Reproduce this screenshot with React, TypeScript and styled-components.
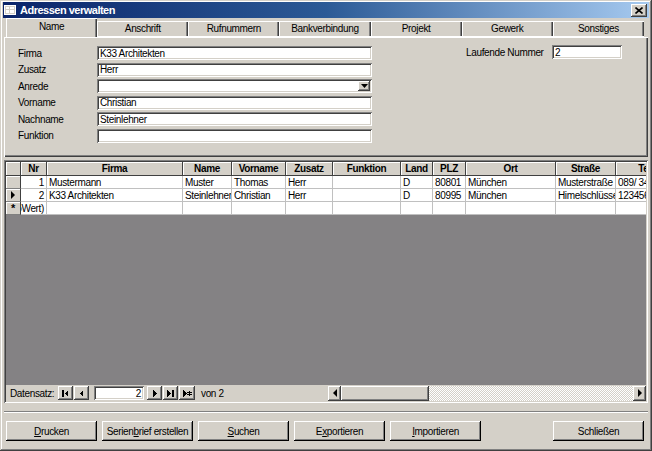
import React from 'react';
import styled, { createGlobalStyle, css } from 'styled-components';

const GlobalStyle = createGlobalStyle`
  html, body { margin: 0; padding: 0; background: #d4d0c8; }
  body {
    font-family: "Liberation Sans", Arial, sans-serif;
    font-size: 10px;
    letter-spacing: -0.35px;
    color: #000;
  }
  * { box-sizing: border-box; }
`;

const raised = css`
  background: #d4d0c8;
  box-shadow: inset -1px -1px #404040, inset 1px 1px #fff, inset -2px -2px #808080;
`;

const sunken = css`
  background: #fff;
  box-shadow: inset 1px 1px #808080, inset -1px -1px #fff, inset 2px 2px #404040, inset -2px -2px #d4d0c8;
`;

interface Column {
  key: string;
  label: string;
  width: number;
  align?: 'left' | 'right';
}

const columns: Column[] = [
  { key: 'nr', label: 'Nr', width: 26, align: 'right' },
  { key: 'firma', label: 'Firma', width: 136 },
  { key: 'name', label: 'Name', width: 49 },
  { key: 'vorname', label: 'Vorname', width: 54 },
  { key: 'zusatz', label: 'Zusatz', width: 47 },
  { key: 'funktion', label: 'Funktion', width: 68 },
  { key: 'land', label: 'Land', width: 32 },
  { key: 'plz', label: 'PLZ', width: 33 },
  { key: 'ort', label: 'Ort', width: 90 },
  { key: 'strasse', label: 'Straße', width: 60 },
  { key: 'tel', label: 'Telefon', width: 78 },
];

const rows: Record<string, string>[] = [
  {
    nr: '1', firma: 'Mustermann', name: 'Muster', vorname: 'Thomas', zusatz: 'Herr', funktion: '',
    land: 'D', plz: '80801', ort: 'München', strasse: 'Musterstraße Nr. 1', tel: '089/ 3456789',
  },
  {
    nr: '2', firma: 'K33 Architekten', name: 'Steinlehner', vorname: 'Christian', zusatz: 'Herr', funktion: '',
    land: 'D', plz: '80995', ort: 'München', strasse: 'Himelschlüsselweg 5', tel: '12345678',
  },
];

const tabs = ['Name', 'Anschrift', 'Rufnummern', 'Bankverbindung', 'Projekt', 'Gewerk', 'Sonstiges'];

const gridCols = `15px ${columns.map((c) => `${c.width}px`).join(' ')}`;

const Window = styled.div`
  width: 652px;
  height: 451px;
  display: flex;
  flex-direction: column;
  padding: 2px 3px 3px;
  background: #d4d0c8;
  box-shadow: inset -1px -1px #404040, inset 1px 1px #d4d0c8, inset -2px -2px #808080, inset 2px 2px #fff;
  overflow: hidden;
`;

const TitleBar = styled.div`
  height: 16px;
  display: flex;
  align-items: center;
  padding: 0 2px 0 1px;
  background: linear-gradient(90deg, #0a246a 0%, #2c5a96 50%, #a6caf0 100%);
  color: #fff;
  font-weight: bold;
  font-size: 11px;
  letter-spacing: -0.5px;
`;

const TitleText = styled.span`
  flex: 1;
  margin-left: 4px;
`;

const CloseButton = styled.div`
  ${raised};
  width: 16px;
  height: 13px;
  display: flex;
  align-items: center;
  justify-content: center;
`;

const Body = styled.div`
  flex: 1;
  display: flex;
  flex-direction: column;
  margin: 0 1px;
`;

const TabStrip = styled.div`
  height: 19px;
  display: flex;
  align-items: flex-end;
  padding: 0 4px 0 2px;
`;

const Tab = styled.div<{ $active?: boolean }>`
  flex: 1;
  height: ${(p) => (p.$active ? 19 : 16)}px;
  display: flex;
  justify-content: center;
  padding-top: ${(p) => (p.$active ? 3 : 2)}px;
  background: #d4d0c8;
  box-shadow: inset 1px 1px #fff, inset -1px 0 #404040, inset -2px 0 #808080;
  ${(p) => !p.$active && css`border-bottom: 1px solid #fff;`}
  position: relative;
  z-index: ${(p) => (p.$active ? 1 : 0)};
`;

const Panel = styled.div`
  height: 120px;
  display: flex;
  justify-content: space-between;
  padding: 9px 26px 0 14px;
  box-shadow: inset 1px 0 #fff, inset 0 1px #fff, inset -1px -1px #404040, inset -2px -2px #808080;
`;

const FieldGrid = styled.div`
  display: grid;
  grid-template-columns: 79px 275px;
  grid-auto-rows: 14px;
  row-gap: 2.6px;
  align-content: start;
`;

const Label = styled.div`
  display: flex;
  align-items: center;
  white-space: nowrap;
`;

const TextBox = styled.div`
  ${sunken};
  height: 14px;
  display: flex;
  align-items: center;
  padding: 0 3px;
  white-space: nowrap;
  overflow: hidden;
`;

const ComboBox = styled(TextBox)`
  justify-content: flex-end;
  padding: 2px;
`;

const DropButton = styled.div`
  ${raised};
  width: 12px;
  height: 10px;
  display: flex;
  align-items: center;
  justify-content: center;
`;

const SideField = styled.div`
  display: grid;
  grid-template-columns: 86px 70px;
  grid-auto-rows: 14px;
  margin-top: -1px;
`;

const SubForm = styled.div`
  margin-top: 3px;
  height: 243px;
  display: flex;
  flex-direction: column;
  padding: 2px;
  background: #d4d0c8;
  box-shadow: inset 1px 1px #808080, inset -1px -1px #fff, inset 2px 2px #404040, inset -2px -2px #d4d0c8;
`;

const Sheet = styled.div`
  flex: 1;
  background: #848284;
  overflow: hidden;
`;

const SheetRow = styled.div<{ $header?: boolean }>`
  display: grid;
  grid-template-columns: ${gridCols};
  height: ${(p) => (p.$header ? 14 : 13)}px;
`;

const HeadCell = styled.div`
  background: #d4d0c8;
  box-shadow: inset 1px 1px #fff;
  border-right: 1px solid #404040;
  border-bottom: 1px solid #404040;
  display: flex;
  align-items: center;
  justify-content: center;
  font-weight: bold;
  overflow: hidden;
  white-space: nowrap;
`;

const Selector = styled.div`
  background: #d4d0c8;
  box-shadow: inset 1px 1px #fff;
  border-right: 1px solid #404040;
  border-bottom: 1px solid #808080;
  display: flex;
  align-items: center;
  justify-content: center;
  font-weight: bold;
  font-size: 11px;
`;

const Cell = styled.div<{ $align?: 'left' | 'right' }>`
  background: #fff;
  border-right: 1px solid #c0c0c0;
  border-bottom: 1px solid #c0c0c0;
  display: flex;
  align-items: center;
  justify-content: ${(p) => (p.$align === 'right' ? 'flex-end' : 'flex-start')};
  padding: 0 2px;
  white-space: nowrap;
  overflow: hidden;
`;

const NavBar = styled.div`
  height: 16px;
  display: flex;
  align-items: center;
  padding-left: 4px;
  background: #d4d0c8;
`;

const NavLabel = styled.span`
  width: 48px;
`;

const NavGroup = styled.div<{ $offset: number }>`
  display: flex;
  gap: 1px;
  margin-left: ${(p) => p.$offset}px;
`;

const NavButton = styled.div<{ $wide?: boolean }>`
  ${raised};
  width: ${(p) => (p.$wide ? 16 : 15)}px;
  height: 14px;
  display: flex;
  align-items: center;
  justify-content: center;
`;

const RecordBox = styled(TextBox)`
  margin-left: 5px;
  width: 50px;
  justify-content: flex-end;
`;

const OfText = styled.span`
  margin-left: 6px;
  flex: 1;
`;

const ScrollBar = styled.div`
  width: 318px;
  height: 15px;
  display: flex;
`;

const ScrollArrow = styled.div`
  ${raised};
  width: 13px;
  display: flex;
  align-items: center;
  justify-content: center;
`;

const ScrollThumb = styled.div`
  ${raised};
  width: 88px;
`;

const ScrollTrack = styled.div`
  flex: 1;
  background-color: #eeede9;
  background-image: repeating-conic-gradient(#ffffff 0 25%, #d4d0c8 0 50%);
  background-size: 2px 2px;
`;

const Separator = styled.div`
  margin-top: 8px;
  height: 2px;
  border-top: 1px solid #808080;
  border-bottom: 1px solid #fff;
`;

const ButtonRow = styled.div`
  margin-top: 8px;
  display: flex;
  gap: 5px;
  padding: 0 4px 0 2px;
`;

const Button = styled.div<{ $push?: boolean }>`
  width: 91px;
  height: 20px;
  display: flex;
  align-items: center;
  justify-content: center;
  background: #d4d0c8;
  box-shadow: inset -1px -1px #000, inset 1px 1px #fff, inset -2px -2px #808080;
  ${(p) => p.$push && css`margin-left: auto;`}

  u { text-decoration: underline; }
`;

const Tri: React.FC<{ dir: 'left' | 'right' | 'down' }> = ({ dir }) => {
  const pts = dir === 'left' ? '4,0 4,8 0,4' : dir === 'right' ? '0,0 0,8 4,4' : '0,0 7,0 3.5,4';
  const w = dir === 'down' ? 7 : 4;
  const h = dir === 'down' ? 4 : 8;
  return (
    <svg width={w} height={h} viewBox={`0 0 ${w} ${h}`}>
      <polygon points={pts} fill="#000" />
    </svg>
  );
};

const NavIcon: React.FC<{ kind: 'first' | 'prev' | 'next' | 'last' | 'new' }> = ({ kind }) => (
  <svg width="9" height="7" viewBox="0 0 9 7" shapeRendering="crispEdges">
    {kind === 'first' && (
      <>
        <rect x="1" y="0" width="2" height="7" fill="#000" />
        <polygon points="7,0 7,7 3.5,3.5" fill="#000" />
      </>
    )}
    {kind === 'prev' && <polygon points="6,0 6,7 2.5,3.5" fill="#000" />}
    {kind === 'next' && <polygon points="3,0 3,7 6.5,3.5" fill="#000" />}
    {kind === 'last' && (
      <>
        <polygon points="1,0 1,7 4.5,3.5" fill="#000" />
        <rect x="6" y="0" width="2" height="7" fill="#000" />
      </>
    )}
    {kind === 'new' && (
      <>
        <polygon points="0,0 0,7 3.5,3.5" fill="#000" />
        <path d="M6.5 1v5M4.5 2l4 3M8.5 2l-4 3" stroke="#000" strokeWidth="1" />
      </>
    )}
  </svg>
);

const App: React.FC = () => {
  return (
    <>
      <GlobalStyle />
      <Window>
        <TitleBar>
          <svg width="12" height="10" viewBox="0 0 12 10" shapeRendering="crispEdges">
            <rect x="0.5" y="0.5" width="11" height="9" fill="#d4d0c8" stroke="#fff" />
            <rect x="2" y="2" width="3" height="2" fill="#fff" />
            <rect x="6" y="2" width="4" height="2" fill="#fff" />
            <rect x="2" y="5" width="3" height="3" fill="#fff" />
            <rect x="6" y="5" width="4" height="3" fill="#fff" />
          </svg>
          <TitleText>Adressen verwalten</TitleText>
          <CloseButton>
            <svg width="8" height="7" viewBox="0 0 8 7">
              <path d="M0.5 0.5l7 6M7.5 0.5l-7 6" stroke="#000" strokeWidth="1.6" />
            </svg>
          </CloseButton>
        </TitleBar>
        <Body>
          <TabStrip>
            {tabs.map((t, i) => (
              <Tab key={t} $active={i === 0}>{t}</Tab>
            ))}
          </TabStrip>
          <Panel>
            <FieldGrid>
              <Label>Firma</Label>
              <TextBox>K33 Architekten</TextBox>
              <Label>Zusatz</Label>
              <TextBox>Herr</TextBox>
              <Label>Anrede</Label>
              <ComboBox>
                <DropButton><Tri dir="down" /></DropButton>
              </ComboBox>
              <Label>Vorname</Label>
              <TextBox>Christian</TextBox>
              <Label>Nachname</Label>
              <TextBox>Steinlehner</TextBox>
              <Label>Funktion</Label>
              <TextBox />
            </FieldGrid>
            <SideField>
              <Label>Laufende Nummer</Label>
              <TextBox>2</TextBox>
            </SideField>
          </Panel>
          <SubForm>
            <Sheet>
              <SheetRow $header>
                <HeadCell />
                {columns.map((c) => (
                  <HeadCell key={c.key}>{c.label}</HeadCell>
                ))}
              </SheetRow>
              {rows.map((r, i) => (
                <SheetRow key={r.nr}>
                  <Selector>{i === 1 && <Tri dir="right" />}</Selector>
                  {columns.map((c) => (
                    <Cell key={c.key} $align={c.align}>{r[c.key]}</Cell>
                  ))}
                </SheetRow>
              ))}
              <SheetRow>
                <Selector>*</Selector>
                {columns.map((c) => (
                  <Cell key={c.key} $align={c.align}>{c.key === 'nr' ? '(AutoWert)' : ''}</Cell>
                ))}
              </SheetRow>
            </Sheet>
            <NavBar>
              <NavLabel>Datensatz:</NavLabel>
              <NavGroup $offset={0}>
                <NavButton><NavIcon kind="first" /></NavButton>
                <NavButton><NavIcon kind="prev" /></NavButton>
              </NavGroup>
              <RecordBox>2</RecordBox>
              <NavGroup $offset={3}>
                <NavButton><NavIcon kind="next" /></NavButton>
                <NavButton><NavIcon kind="last" /></NavButton>
                <NavButton $wide><NavIcon kind="new" /></NavButton>
              </NavGroup>
              <OfText>von 2</OfText>
              <ScrollBar>
                <ScrollArrow><Tri dir="left" /></ScrollArrow>
                <ScrollThumb />
                <ScrollTrack />
                <ScrollArrow><Tri dir="right" /></ScrollArrow>
              </ScrollBar>
            </NavBar>
          </SubForm>
          <Separator />
          <ButtonRow>
            <Button><span><u>D</u>rucken</span></Button>
            <Button><span>Serien<u>b</u>rief erstellen</span></Button>
            <Button><span><u>S</u>uchen</span></Button>
            <Button><span>E<u>x</u>portieren</span></Button>
            <Button><span><u>I</u>mportieren</span></Button>
            <Button $push>Schließen</Button>
          </ButtonRow>
        </Body>
      </Window>
    </>
  );
};

export default App;
